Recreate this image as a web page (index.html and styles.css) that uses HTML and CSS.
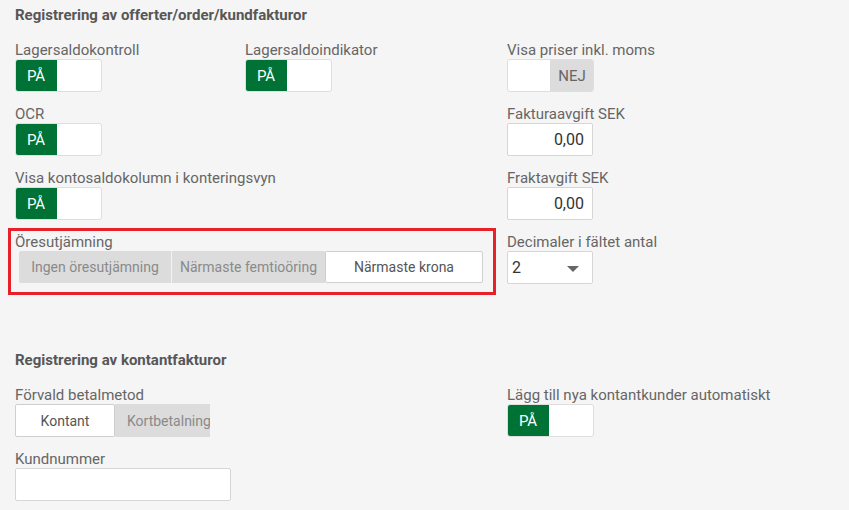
FILE: index.html
```html
<!DOCTYPE html>
<html lang="sv">
<head>
<meta charset="utf-8">
<title>Inställningar</title>
<link rel="stylesheet" href="styles.css">
</head>
<body>
<div class="page">
  <h2 class="section-title">Registrering av offerter/order/kundfakturor</h2>
  <div class="grid">
    <div class="field">
      <div class="label">Lagersaldokontroll</div>
      <div class="toggle"><span class="on">PÅ</span><span class="knob"></span></div>
    </div>
    <div class="field">
      <div class="label">Lagersaldoindikator</div>
      <div class="toggle"><span class="on">PÅ</span><span class="knob"></span></div>
    </div>
    <div class="field">
      <div class="label">Visa priser inkl. moms</div>
      <div class="toggle"><span class="knob"></span><span class="off">NEJ</span></div>
    </div>

    <div class="field">
      <div class="label">OCR</div>
      <div class="toggle"><span class="on">PÅ</span><span class="knob"></span></div>
    </div>
    <div class="empty"></div>
    <div class="field">
      <div class="label">Fakturaavgift SEK</div>
      <div class="input num">0,00</div>
    </div>

    <div class="field">
      <div class="label nowrap">Visa kontosaldokolumn i konteringsvyn</div>
      <div class="toggle"><span class="on">PÅ</span><span class="knob"></span></div>
    </div>
    <div class="empty"></div>
    <div class="field">
      <div class="label">Fraktavgift SEK</div>
      <div class="input num">0,00</div>
    </div>

    <div class="highlight">
      <div class="label">Öresutjämning</div>
      <div class="segmented wide">
        <span class="seg">Ingen öresutjämning</span>
        <span class="seg">Närmaste femtioöring</span>
        <span class="seg active">Närmaste krona</span>
      </div>
    </div>
    <div class="field">
      <div class="label">Decimaler i fältet antal</div>
      <div class="input select"><span>2</span><span class="caret"></span></div>
    </div>
  </div>

  <h2 class="section-title second">Registrering av kontantfakturor</h2>
  <div class="grid">
    <div class="field">
      <div class="label">Förvald betalmetod</div>
      <div class="segmented">
        <span class="seg active pay-cash">Kontant</span>
        <span class="seg pay-card">Kortbetalning</span>
      </div>
    </div>
    <div class="empty"></div>
    <div class="field">
      <div class="label nowrap">Lägg till nya kontantkunder automatiskt</div>
      <div class="toggle"><span class="on">PÅ</span><span class="knob"></span></div>
    </div>

    <div class="field">
      <div class="label">Kundnummer</div>
      <div class="input text"></div>
    </div>
  </div>
</div>
</body>
</html>
```

FILE: styles.css
```css
* { box-sizing: border-box; }

html, body {
  margin: 0;
  background: #f5f5f5;
}

body {
  font-family: Roboto, "Liberation Sans", Arial, sans-serif;
  font-size: 15px;
  color: #666;
}

.page {
  padding: 7px 15px 0 15px;
}

.section-title {
  margin: 0 0 19px 0;
  font-size: 15px;
  line-height: 16px;
  font-weight: 700;
  color: #575757;
}

.section-title.second {
  margin-top: 54px;
}

.grid {
  display: grid;
  grid-template-columns: 230px 262px 1fr;
  align-items: start;
}

.field {
  padding-bottom: 14px;
}

.label {
  line-height: 16px;
  height: 16px;
  margin-bottom: 1px;
  color: #666;
}

.nowrap { white-space: nowrap; }

/* toggle */
.toggle {
  display: flex;
  width: 87px;
  height: 33px;
  border: 1px solid #dedede;
  border-radius: 3px;
  background: #fff;
  overflow: hidden;
}

.toggle .on {
  width: 42px;
  margin: -1px 0 -1px -1px;
  background: #007236;
  color: #fff;
  font-size: 15px;
  display: flex;
  align-items: center;
  justify-content: center;
}

.toggle .knob {
  flex: 1;
}

.toggle .off {
  width: 44px;
  margin: -1px -1px -1px 0;
  background: #dcdcdc;
  color: #666;
  font-size: 15px;
  display: flex;
  align-items: center;
  justify-content: center;
}

/* inputs */
.input {
  height: 33px;
  border: 1px solid #d6d6d6;
  border-radius: 2px;
  background: #fff;
  font-size: 16px;
  color: #333;
  display: flex;
  align-items: center;
}

.input.num {
  width: 86px;
  justify-content: flex-end;
  padding-right: 8px;
}

.input.select {
  width: 86px;
  justify-content: space-between;
  padding: 0 13px 0 4px;
}

.caret {
  width: 0;
  height: 0;
  border-left: 6px solid transparent;
  border-right: 6px solid transparent;
  border-top: 6px solid #666;
  margin-top: 2px;
}

.input.text {
  width: 216px;
}

/* segmented */
.segmented {
  display: flex;
  height: 33px;
  font-size: 14px;
}

.seg {
  display: flex;
  align-items: center;
  justify-content: center;
  background: #dcdcdc;
  color: #8a8a8a;
  white-space: nowrap;
  overflow: hidden;
}

.seg.active {
  background: #fff;
  color: #555;
  border: 1px solid #cfcfcf;
  border-radius: 2px;
}

.segmented.wide {
  width: 464px;
  height: 32px;
  margin-left: 4px;
}

.segmented.wide .seg:nth-child(1) {
  width: 153px;
  border-radius: 2px 0 0 2px;
  border-right: 1px solid #f2f2f2;
}

.segmented.wide .seg:nth-child(2) {
  width: 153px;
}

.segmented.wide .seg:nth-child(3) {
  flex: 1;
}

.pay-cash {
  width: 100px;
}

.pay-card {
  width: 95px;
  justify-content: flex-start;
  padding-left: 12px;
}

/* highlighted (annotated) field */
.highlight {
  grid-column: 1 / span 2;
  justify-self: start;
  width: 488px;
  margin: -6px 0 0 -7px;
  border: 3px solid #e8202a;
  padding: 3px 10px 9px 4px;
}
```
